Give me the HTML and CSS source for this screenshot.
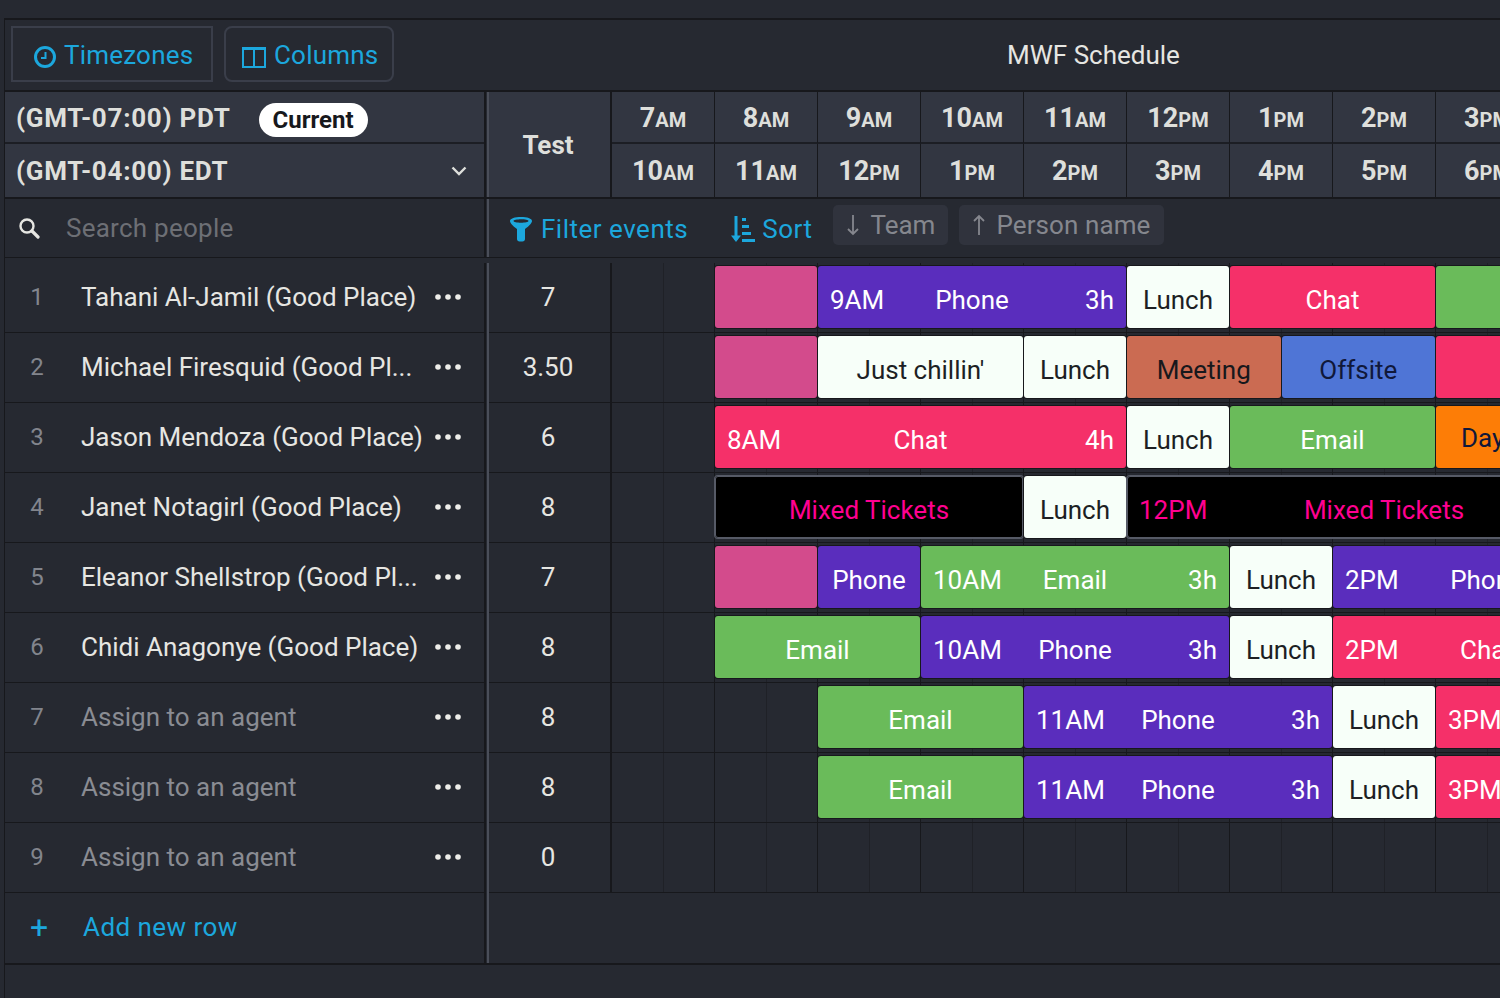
FILE: index.html
```html
<!DOCTYPE html>
<html lang="en">
<head>
<meta charset="utf-8">
<title>MWF Schedule</title>
<link rel="stylesheet" href="styles.css">
</head>
<body>
<svg class="defs" aria-hidden="true">
  <symbol id="dots" viewBox="0 0 26 6"><circle cx="3" cy="3" r="2.8"/><circle cx="13" cy="3" r="2.8"/><circle cx="23" cy="3" r="2.8"/></symbol>
</svg>
<main class="panel">
  <header class="toolbar">
    <button class="tool tool-square">
      <svg class="tool-icon" width="24" height="24" viewBox="0 0 24 24"><circle cx="12" cy="12" r="9.5" fill="none" stroke="currentColor" stroke-width="3"/><path d="M12.5 7v6H8" fill="none" stroke="currentColor" stroke-width="2"/></svg>
      <span>Timezones</span>
    </button>
    <button class="tool tool-round">
      <svg class="tool-icon" width="26" height="24" viewBox="0 0 26 24"><path d="M2 3h22v19H2zM13 3v19" fill="none" stroke="currentColor" stroke-width="2"/><path d="M1 2h24v3H1z" fill="currentColor"/></svg>
      <span>Columns</span>
    </button>
    <h1 class="title">MWF Schedule</h1>
  </header>

  <section class="row row-head">
    <div class="side side-head">
      <div class="zone zone-top"><b>(GMT-07:00) PDT</b><span class="pill">Current</span></div>
      <div class="zone zone-second"><b>(GMT-04:00) EDT</b>
        <svg class="chevron" width="16" height="10" viewBox="0 0 16 10"><path d="M1.5 1.5 8 8l6.500-6.500" fill="none" stroke="currentColor" stroke-width="2.400"/></svg>
      </div>
    </div>
    <div class="main main-head">
      <div class="test test-head">Test</div>
      <div class="hours">
        <div class="hour">7<small>AM</small></div><div class="hour">8<small>AM</small></div><div class="hour">9<small>AM</small></div><div class="hour">10<small>AM</small></div><div class="hour">11<small>AM</small></div><div class="hour">12<small>PM</small></div><div class="hour">1<small>PM</small></div><div class="hour">2<small>PM</small></div><div class="hour">3<small>PM</small></div>
        <div class="hour">10<small>AM</small></div><div class="hour">11<small>AM</small></div><div class="hour">12<small>PM</small></div><div class="hour">1<small>PM</small></div><div class="hour">2<small>PM</small></div><div class="hour">3<small>PM</small></div><div class="hour">4<small>PM</small></div><div class="hour">5<small>PM</small></div><div class="hour">6<small>PM</small></div>
      </div>
    </div>
  </section>

  <section class="row row-search">
    <div class="side search">
      <svg class="search-icon" width="22" height="22" viewBox="0 0 22 22"><circle cx="9" cy="9" r="6.500" fill="none" stroke="currentColor" stroke-width="2.400"/><path d="m14 14 6 6" stroke="currentColor" stroke-width="3.200" stroke-linecap="round"/></svg>
      <span class="placeholder">Search people</span>
    </div>
    <div class="main filters">
      <span class="filter">
        <svg width="24" height="26" viewBox="0 0 24 26"><path fill-rule="evenodd" d="M12 1c6 0 11 1.500 11 4 0 1.500-2.500 5-7 8v10c0 1.500-1 2.500-2.500 2.500h-3C9 25.500 8 24.500 8 23V13C3.500 10 1 6.500 1 5c0-2.500 5-4 11-4Zm0 2.300c-4 0-7.500.7-7.500 1.700S8 6.700 12 6.700 19.500 6 19.500 5 16 3.300 12 3.300Z" fill="currentColor"/></svg>
        <span>Filter events</span>
      </span>
      <span class="filter filter-sort">
        <svg width="24" height="28" viewBox="0 0 24 28"><path d="M5 1v24" stroke="currentColor" stroke-width="3"/><path d="M0 20.500h10L5 27Z" fill="currentColor"/><path d="M11 3h4v3h-4zM11 10h7v3h-7zM11 17h9v3h-9zM11 24h13v3H11z" fill="currentColor"/></svg>
        <span>Sort</span>
      </span>
      <span class="chip"><svg class="chip-arrow" width="12" height="22" viewBox="0 0 12 22"><path d="M6 1v19M1 15l5 5 5-5" fill="none" stroke="currentColor" stroke-width="1.800"/></svg>Team</span>
      <span class="chip"><svg class="chip-arrow" width="12" height="22" viewBox="0 0 12 22"><path d="M6 21V2M1 7l5-5 5 5" fill="none" stroke="currentColor" stroke-width="1.800"/></svg>Person name</span>
    </div>
  </section>

  <div class="rows">
    <section class="row row-data">
      <div class="side person"><span class="num">1</span><span class="name">Tahani Al-Jamil (Good Place)</span><svg class="dots"><use href="#dots"/></svg></div>
      <div class="main">
        <div class="test">7</div>
        <div class="track">
          <i class="s2"></i>
          <div class="ev s2 rose"></div>
          <div class="ev s6 purple"><span>9AM</span><span>Phone</span><span class="end">3h</span></div>
          <div class="ev s2 white"><span></span><span>Lunch</span></div>
          <div class="ev s4 hot"><span></span><span>Chat</span></div>
          <div class="ev s4 green"></div>
        </div>
      </div>
    </section>
    <section class="row row-data">
      <div class="side person"><span class="num">2</span><span class="name">Michael Firesquid (Good Pl...</span><svg class="dots"><use href="#dots"/></svg></div>
      <div class="main">
        <div class="test">3.50</div>
        <div class="track">
          <i class="s2"></i>
          <div class="ev s2 rose"></div>
          <div class="ev s4 white"><span></span><span>Just chillin'</span></div>
          <div class="ev s2 white"><span></span><span>Lunch</span></div>
          <div class="ev s3 coral"><span></span><span>Meeting</span></div>
          <div class="ev s3 blue"><span></span><span>Offsite</span></div>
          <div class="ev s4 hot"></div>
        </div>
      </div>
    </section>
    <section class="row row-data">
      <div class="side person"><span class="num">3</span><span class="name">Jason Mendoza (Good Place)</span><svg class="dots"><use href="#dots"/></svg></div>
      <div class="main">
        <div class="test">6</div>
        <div class="track">
          <i class="s2"></i>
          <div class="ev s8 hot"><span>8AM</span><span>Chat</span><span class="end">4h</span></div>
          <div class="ev s2 white"><span></span><span>Lunch</span></div>
          <div class="ev s4 green"><span></span><span>Email</span></div>
          <div class="ev s4 orange ev-left">Day</div>
        </div>
      </div>
    </section>
    <section class="row row-data">
      <div class="side person"><span class="num">4</span><span class="name">Janet Notagirl (Good Place)</span><svg class="dots"><use href="#dots"/></svg></div>
      <div class="main">
        <div class="test">8</div>
        <div class="track">
          <i class="s2"></i>
          <div class="ev s6 black"><span></span><span>Mixed Tickets</span></div>
          <div class="ev s2 white"><span></span><span>Lunch</span></div>
          <div class="ev s10 black"><span>12PM</span><span>Mixed Tickets</span></div>
        </div>
      </div>
    </section>
    <section class="row row-data">
      <div class="side person"><span class="num">5</span><span class="name">Eleanor Shellstrop (Good Pl...</span><svg class="dots"><use href="#dots"/></svg></div>
      <div class="main">
        <div class="test">7</div>
        <div class="track">
          <i class="s2"></i>
          <div class="ev s2 rose"></div>
          <div class="ev s2 purple"><span></span><span>Phone</span></div>
          <div class="ev s6 green"><span>10AM</span><span>Email</span><span class="end">3h</span></div>
          <div class="ev s2 white"><span></span><span>Lunch</span></div>
          <div class="ev s6 purple"><span>2PM</span><span>Phone</span><span class="end">3h</span></div>
        </div>
      </div>
    </section>
    <section class="row row-data">
      <div class="side person"><span class="num">6</span><span class="name">Chidi Anagonye (Good Place)</span><svg class="dots"><use href="#dots"/></svg></div>
      <div class="main">
        <div class="test">8</div>
        <div class="track">
          <i class="s2"></i>
          <div class="ev s4 green"><span></span><span>Email</span></div>
          <div class="ev s6 purple"><span>10AM</span><span>Phone</span><span class="end">3h</span></div>
          <div class="ev s2 white"><span></span><span>Lunch</span></div>
          <div class="ev s6 hot"><span>2PM</span><span>Chat</span><span class="end">3h</span></div>
        </div>
      </div>
    </section>
    <section class="row row-data">
      <div class="side person muted"><span class="num">7</span><span class="name">Assign to an agent</span><svg class="dots"><use href="#dots"/></svg></div>
      <div class="main">
        <div class="test">8</div>
        <div class="track">
          <i class="s4"></i>
          <div class="ev s4 green"><span></span><span>Email</span></div>
          <div class="ev s6 purple"><span>11AM</span><span>Phone</span><span class="end">3h</span></div>
          <div class="ev s2 white"><span></span><span>Lunch</span></div>
          <div class="ev s6 hot"><span>3PM</span><span>Chat</span><span class="end">3h</span></div>
        </div>
      </div>
    </section>
    <section class="row row-data">
      <div class="side person muted"><span class="num">8</span><span class="name">Assign to an agent</span><svg class="dots"><use href="#dots"/></svg></div>
      <div class="main">
        <div class="test">8</div>
        <div class="track">
          <i class="s4"></i>
          <div class="ev s4 green"><span></span><span>Email</span></div>
          <div class="ev s6 purple"><span>11AM</span><span>Phone</span><span class="end">3h</span></div>
          <div class="ev s2 white"><span></span><span>Lunch</span></div>
          <div class="ev s6 hot"><span>3PM</span><span>Chat</span><span class="end">3h</span></div>
        </div>
      </div>
    </section>
    <section class="row row-data">
      <div class="side person muted"><span class="num">9</span><span class="name">Assign to an agent</span><svg class="dots"><use href="#dots"/></svg></div>
      <div class="main">
        <div class="test">0</div>
        <div class="track"></div>
      </div>
    </section>
    <section class="row row-add">
      <div class="side add"><span class="plus">+</span><span class="add-label">Add new row</span></div>
      <div class="main main-add"></div>
    </section>
  </div>
</main>
</body>
</html>
```

FILE: styles.css
```css
* { box-sizing: border-box; }
html, body { margin: 0; height: 998px; overflow: hidden; }
body {
  background: #262931;
  color: #e6e6e2;
  font-family: Roboto, "Noto Sans", sans-serif;
  font-size: 26px;
  padding: 18px 0 0 4px;
}
.defs { position: absolute; width: 0; height: 0; }
.panel {
  height: 980px;
  border-left: 1px solid #17181c;
  border-top: 2px solid #17181c;
  overflow: hidden;
}
.toolbar {
  height: 72px;
  padding: 6px 0 0 6px;
  border-bottom: 2px solid #17181c;
  display: flex;
  align-items: flex-start;
  gap: 11px;
}
.tool {
  height: 56px;
  background: none;
  border: 2px solid #3a3e4a;
  color: #1ca7dd;
  font: inherit;
  letter-spacing: .2px;
  display: flex;
  align-items: center;
  padding: 2px 0 0;
}
.tool-square { width: 202px; padding-left: 20px; gap: 7px; }
.tool-round { width: 170px; padding-left: 15px; gap: 7px; border-radius: 8px; }
.tool-icon { margin-top: 4px; flex: none; }
.title {
  flex: 1;
  margin: 0;
  padding: 14px 0 0 282px;
  font-size: 26px;
  font-weight: 400;
  text-align: center;
}

.row { display: flex; }
.side {
  width: 481px;
  flex: none;
  border-right: 2px solid #17181c;
}
.main {
  flex: 1;
  display: flex;
  margin-left: 1px;
  border-left: 2px solid #4a4e59;
  min-width: 0;
  overflow: hidden;
}

.row-head { height: 107px; border-bottom: 2px solid #17181c; }
.side-head, .main-head { background: #323641; }
.zone {
  height: 52px;
  display: flex;
  align-items: center;
  padding: 2px 17px 0 11px;
  border-bottom: 2px solid #1c1e24;
  justify-content: space-between;
  color: #dedfdb;
}
.zone b { font-weight: 700; white-space: nowrap; letter-spacing: .72px; }
.zone-top { justify-content: flex-start; }
.zone-second { border-bottom: 0; height: 53px; padding-top: 0; }
.pill {
  margin: 4px 0 0 28px;
  width: 109px;
  height: 34px;
  border-radius: 17px;
  background: #fff;
  color: #17181c;
  font-size: 24px;
  font-weight: 700;
  display: flex;
  align-items: center;
  justify-content: center;
}
.chevron { flex: none; margin-top: 1px; }

.test {
  width: 123px;
  flex: none;
  padding: 0 3px 2px 0;
  border-right: 2px solid #17181c;
  display: flex;
  align-items: center;
  justify-content: center;
}
.test-head { font-weight: 700; color: #dedfdb; padding-bottom: 0; }
.hours {
  display: grid;
  grid-template-columns: repeat(9, 103px);
  grid-template-rows: 52px 53px;
}
.hour {
  display: flex;
  align-items: baseline;
  justify-content: center;
  padding-top: 10px;
  font-size: 27px;
  font-weight: 700;
  color: #dedfdb;
  border-right: 1px solid #17181c;
}
.hour:nth-child(-n+9) { border-bottom: 2px solid #1c1e24; }
.hour:nth-child(n+10) { padding-top: 11px; }
.hour small { font-size: 20px; }

.row-search { height: 58px; }
.search {
  display: flex;
  align-items: center;
  padding-left: 13px;
  gap: 26px;
}
.search-icon { flex: none; }
.placeholder { color: #6d6f75; letter-spacing: .25px; }
.filters {
  align-items: flex-start;
  padding: 6px 0 0 20px;
}
.filter {
  display: flex;
  align-items: center;
  gap: 8px;
  color: #1ca7dd;
  margin-top: 9px;
  letter-spacing: .5px;
}
.filter-sort { margin-left: 43px; gap: 7px; }
.chip {
  height: 40px;
  margin-left: 21px;
  padding: 0 13px 0 14px;
  background: #30333d;
  border-radius: 5px;
  color: #85878e;
  display: flex;
  align-items: center;
  gap: 11px;
}
.chip + .chip { margin-left: 11px; padding-right: 13px; letter-spacing: .1px; }
.chip-arrow { flex: none; }

.rows { border-top: 1px solid #17181c; padding-top: 5px; }
.row-data { height: 70px; }
.row-data .side, .row-data .test, .row-data .track { border-bottom: 1px solid #17181c; }
.person {
  display: flex;
  align-items: center;
  white-space: nowrap;
  padding-bottom: 2px;
}
.num { width: 76px; flex: none; text-align: center; padding-right: 12px; font-size: 24px; color: #82858d; }
.name { flex: 1; min-width: 0; overflow: hidden; }
.muted .name { color: #8a8c93; }
.dots { width: 26px; height: 6px; fill: #eeeeea; margin-right: 23px; flex: none; }
.track {
  flex: 1;
  display: grid;
  grid-auto-flow: column;
  grid-auto-columns: 51.5px;
  grid-template-rows: 62px;
  padding-top: 3px;
  background: repeating-linear-gradient(90deg, transparent 0 51px, #1f2127 51px 52px, transparent 52px 102px, #17181c 102px 103px);
}
.s2 { grid-column: span 2; }
.s3 { grid-column: span 3; }
.s4 { grid-column: span 4; }
.s6 { grid-column: span 6; }
.s8 { grid-column: span 8; }
.s10 { grid-column: span 10; }
.ev {
  margin-right: 1px;
  border-radius: 3px;
  box-shadow: 0 0 0 1px #17181c;
  display: grid;
  grid-template-columns: 1fr auto 1fr;
  align-items: center;
  padding: 5px 12px 0;
  white-space: nowrap;
  overflow: hidden;
}
.end { justify-self: end; }
.ev-left { display: block; padding: 17px 0 0 25px; }
.rose { background: #d34b8c; }
.purple { background: #5a2dbd; color: #fff; }
.hot { background: #f53069; color: #fff; }
.green { background: #6abb5a; color: #fff; }
.white { background: #f7fff9; color: #1d1f24; }
.coral { background: #cb6b52; color: #17181c; }
.blue { background: #4f75d6; color: #10183a; }
.orange { background: #fd7d06; color: #10183a; }
.black { background: #000; color: #ff0090; box-shadow: 0 0 0 1px #565a66, inset 0 0 0 1px #565a66; }

.row-add { height: 72px; border-bottom: 2px solid #17181c; }
.add {
  display: flex;
  align-items: center;
  color: #1ca7dd;
  padding-bottom: 2px;
}
.add-label { letter-spacing: .45px; }
.plus { width: 78px; text-align: center; padding-right: 10px; font-size: 32px; flex: none; }
```
